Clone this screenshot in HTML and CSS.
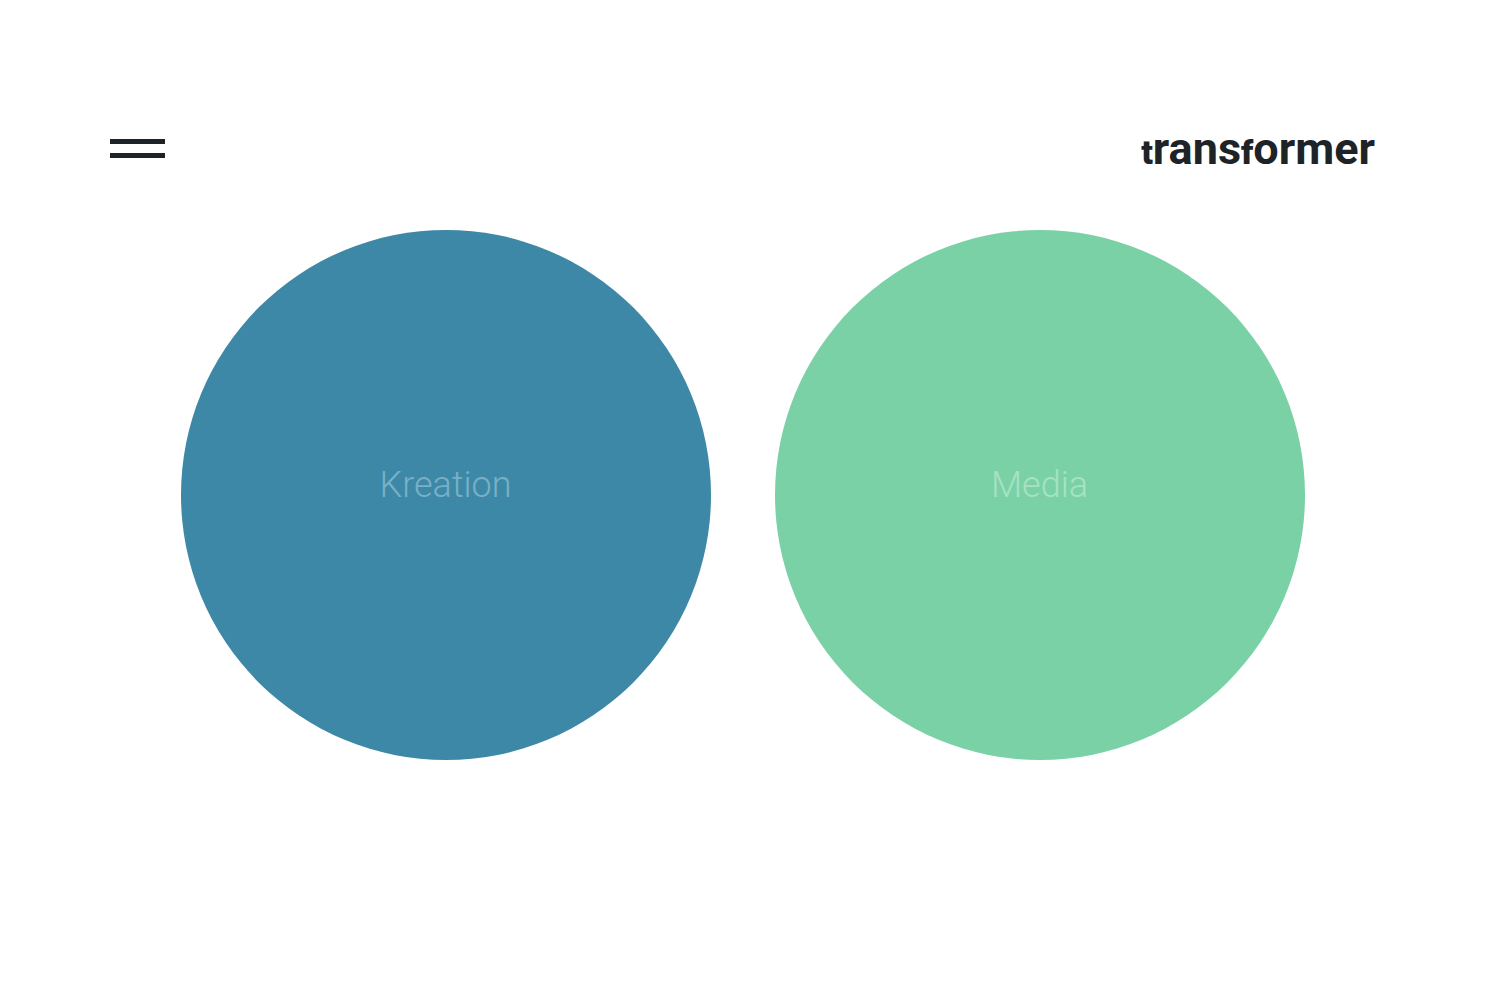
FILE: index.html
```html
<!DOCTYPE html>
<html lang="de">
<head>
<meta charset="utf-8">
<meta name="viewport" content="width=device-width, initial-scale=1">
<title>transformer</title>
<link rel="stylesheet" href="styles.css">
</head>
<body>

<header class="header">
	<button class="menu" type="button" aria-label="Menü">
		<span class="bar"></span>
		<span class="bar"></span>
	</button>
	<a class="logo" href="#"><span class="low">t</span>rans<span class="low">f</span>ormer</a>
</header>

<main class="circles">
	<a class="circle kreation" href="#kreation"><span>Kreation</span></a>
	<a class="circle media" href="#media"><span>Media</span></a>
</main>

</body>
</html>
```
FILE: styles.css
```css
* {
	box-sizing: border-box;
}
body {
	margin: 0;
	background: #fff;
	font-family: Roboto, "Liberation Sans", sans-serif;
}
.header {
	display: flex;
	justify-content: space-between;
	align-items: flex-start;
	padding: 122px 110px 0;
}
.menu {
	display: flex;
	flex-direction: column;
	gap: 9px;
	width: 55px;
	margin-top: 17px;
	padding: 0;
	border: 0;
	background: none;
	cursor: pointer;
}
.bar {
	width: 100%;
	height: 5px;
	background: #1d2326;
}
.logo {
	font-size: 45px;
	font-weight: bold;
	line-height: 54px;
	color: #1d2326;
	text-decoration: none;
}
/* t and f stay at the height of the other letters */
.logo .low {
	font-size: 34px;
	font-weight: 900;
}
.circles {
	display: flex;
	justify-content: center;
	gap: 64px;
	padding: 51px 110px;
}
.circle {
	display: flex;
	align-items: center;
	justify-content: center;
	width: 42%;
	max-width: 530px;
	aspect-ratio: 1;
	padding-bottom: 20px;
	border-radius: 50%;
	font-size: 36px;
	font-weight: 300;
	line-height: 46px;
	text-decoration: none;
}
.kreation {
	background: #3d88a7;
	color: #79b0c6;
}
.media {
	background: #7bd1a6;
	color: #a6e2c3;
}
```
